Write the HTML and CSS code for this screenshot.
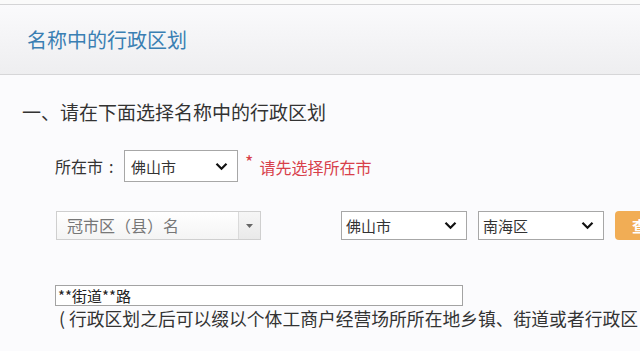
FILE: index.html
```html
<!DOCTYPE html>
<html lang="zh-CN">
<head>
<meta charset="utf-8">
<title>名称中的行政区划</title>
<link rel="stylesheet" href="styles.css">
</head>
<body>
<div class="topstrip"></div>
<header class="panel-head">
  <h1 class="panel-title">名称中的行政区划</h1>
</header>
<main class="content">
  <h2 class="section-title">一、请在下面选择名称中的行政区划</h2>

  <div class="row row-city">
    <span class="label">所在市<span class="colon">:</span></span>
    <div class="select select-city">
      <span class="select-text">佛山市</span>
      <svg class="chev" width="13" height="9" viewBox="0 0 13 9"><path d="M1.5 1.8 L6.5 6.8 L11.5 1.8" fill="none" stroke="#111" stroke-width="2.2"/></svg>
    </div>
    <span class="req">*</span>
    <span class="hint">请先选择所在市</span>
  </div>

  <div class="row row-area">
    <div class="combo">
      <span class="combo-text">冠市区（县）名</span>
      <span class="combo-btn"><svg width="7" height="4" viewBox="0 0 7 4"><path d="M0 0 H7 L3.5 4 Z" fill="#666"/></svg></span>
    </div>
    <div class="select select-sm select-first">
      <span class="select-text">佛山市</span>
      <svg class="chev" width="13" height="9" viewBox="0 0 13 9"><path d="M1.5 1.8 L6.5 6.8 L11.5 1.8" fill="none" stroke="#111" stroke-width="2.2"/></svg>
    </div>
    <div class="select select-sm">
      <span class="select-text">南海区</span>
      <svg class="chev" width="13" height="9" viewBox="0 0 13 9"><path d="M1.5 1.8 L6.5 6.8 L11.5 1.8" fill="none" stroke="#111" stroke-width="2.2"/></svg>
    </div>
    <button class="btn">查</button>
  </div>

  <div class="text-input">**街道**路</div>
  <p class="note"><span class="paren">(</span>行政区划之后可以缀以个体工商户经营场所所在地乡镇、街道或者行政区</p>
</main>
</body>
</html>
```

FILE: styles.css
```css
* { box-sizing: border-box; }
html, body {
  margin: 0;
  padding: 0;
  width: 640px;
  height: 351px;
  overflow: hidden;
  background: #fbfbfd;
  font-family: "Noto Sans CJK SC", "Noto Sans", sans-serif;
  color: #333;
}
.topstrip {
  height: 4px;
  background: #fafafa;
}
.panel-head {
  height: 71px;
  border-top: 1px solid #d4d4d6;
  border-bottom: 1px solid #d6d6d8;
  background: linear-gradient(#fafafc, #eeeef0);
  display: flex;
  align-items: center;
  padding-left: 27px;
  padding-top: 1px;
}
.panel-title {
  margin: 0;
  font-size: 20px;
  font-weight: normal;
  line-height: 24px;
  color: #3a7fb3;
}
.content {
  padding-top: 25px;
}
.section-title {
  margin: 0;
  padding-left: 22px;
  font-size: 19px;
  font-weight: normal;
  line-height: 24px;
  color: #333;
}
.row {
  display: flex;
  align-items: center;
}
.row > * { flex-shrink: 0; }
.row-city {
  margin-top: 26px;
  padding-left: 55px;
  height: 32px;
}
.label {
  font-size: 16px;
  width: 69px;
  color: #333;
}
.colon {
  display: inline-block;
  margin-left: 6px;
}
.select {
  display: flex;
  align-items: center;
  justify-content: space-between;
  border: 1px solid #a7a7a7;
  background: #fff;
  padding: 0 9px 0 6px;
}
.select-city {
  width: 114px;
  height: 32px;
}
.select-text {
  font-size: 15px;
  color: #333;
}
.chev { display: block; }
.req {
  color: #d8404a;
  font-size: 18px;
  margin-left: 7px;
  align-self: flex-start;
  line-height: 18px;
  margin-top: 2px;
}
.hint {
  color: #d8404a;
  font-size: 16px;
  margin-left: 6px;
  padding-top: 2px;
}
.row-area {
  margin-top: 29px;
  padding-left: 56px;
  height: 29px;
}
.combo {
  width: 205px;
  height: 29px;
  display: flex;
  border: 1px solid #cfcfcf;
  background: linear-gradient(#ffffff, #f4f4f4);
}
.combo-text {
  flex: 1;
  font-size: 16px;
  color: #777;
  padding-left: 10px;
  line-height: 27px;
}
.combo-btn {
  width: 22px;
  border-left: 1px solid #dadada;
  background: linear-gradient(#f6f6f6, #e9e9e9);
  display: flex;
  align-items: center;
  justify-content: center;
}
.select-sm {
  width: 126px;
  height: 29px;
  margin-left: 11px;
  padding-left: 4px;
}
.select-first { margin-left: 80px; }
.btn {
  margin-left: 11px;
  height: 29px;
  width: 25px;
  border: none;
  border-radius: 4px 0 0 4px;
  background: #f1ad55;
  color: #fff;
  font-family: inherit;
  font-size: 15px;
  font-weight: bold;
  padding: 0 0 0 17px;
  text-align: left;
  overflow: hidden;
  white-space: nowrap;
}
.text-input {
  margin-top: 45px;
  margin-left: 55px;
  width: 408px;
  height: 21px;
  border: 1px solid #a3a3a3;
  background: #fff;
  font-size: 15px;
  line-height: 19px;
  padding-left: 2px;
  color: #222;
}
.note {
  margin: 2px 0 0 0;
  padding-left: 59px;
  font-size: 17.8px;
  line-height: 20px;
  white-space: nowrap;
  color: #333;
}
.paren {
  margin-right: 4px;
}
```
